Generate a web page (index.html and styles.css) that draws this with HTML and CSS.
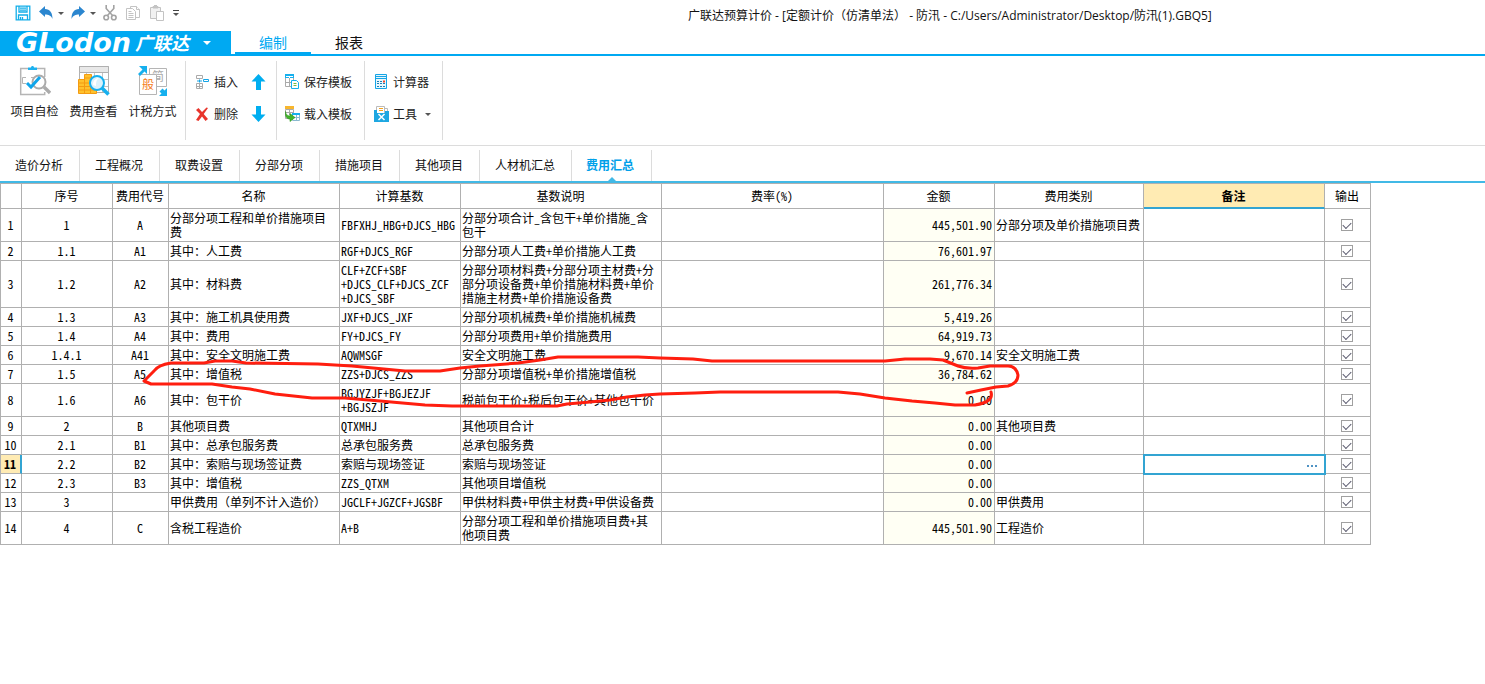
FILE: index.html
```html
<!DOCTYPE html>
<html lang="zh-CN">
<head>
<meta charset="utf-8">
<title>广联达预算计价</title>
<link rel="stylesheet" href="styles.css">
</head>
<body>
<header class="titlebar">
  <div class="quick">
    <button class="qbtn" aria-label="保存"><svg width="16" height="16" viewBox="0 0 16 16" fill="none" stroke="#12aee9" stroke-width="1.3"><path d="M1.2 1.2h13.6v13.6H1.2z"/><path d="M4 1v6h8V1M3.5 15v-5h9v5M5.500 12v3M7.500 12v3M5 3.200h6M5 5.200h6"/></svg></button>
    <button class="qbtn qbtn-wide" aria-label="撤销"><svg width="14" height="14" viewBox="0 0 14 14"><path fill="#2b86cf" d="M0 5.500 6 0v3C11 3.200 13.500 6.500 13.500 13 12 9.500 9.500 8.500 6 8.500V11z"/></svg><i class="caret"></i></button>
    <button class="qbtn qbtn-wide" aria-label="恢复"><svg width="14" height="14" viewBox="0 0 14 14"><path fill="#2b86cf" d="M14 5.500 8 0v3C3 3.200.5 6.500.5 13 2 9.500 4.500 8.500 8 8.500V11z"/></svg><i class="caret"></i></button>
    <button class="qbtn" aria-label="剪切"><svg width="14" height="16" viewBox="0 0 14 16" fill="none" stroke="#a3a3a3" stroke-width="1.600"><circle cx="3.200" cy="12.500" r="2.300"/><circle cx="10.800" cy="12.500" r="2.300"/><path d="M3.200 0v3.500l6.300 7M10.800 0v3.500l-6.300 7"/></svg></button>
    <button class="qbtn" aria-label="复制"><svg width="16" height="16" viewBox="0 0 16 16" fill="#fff" stroke="#c3c3c3"><path d="M5.500 1.500h6l3 3v8h-9z"/><path d="M1.500 3.500h6l3 3v8h-9z"/><path d="M3.500 6.500h3M3.500 8.500h5M3.500 10.500h5M3.500 12.500h5M11.500 1.500v3h3"/></svg></button>
    <button class="qbtn" aria-label="粘贴"><svg width="16" height="16" viewBox="0 0 16 16" fill="#f1f1f1" stroke="#c3c3c3"><path d="M1.500 2.500h10v11h-10z"/><path fill="#c3c3c3" d="M4 3V1.500h1.500V0h2v1.500H9V3z"/><path fill="#fff" d="M7.500 6.500h7v9h-7z"/></svg></button>
    <button class="qbtn qbtn-more" aria-label="更多"><i class="bar"></i><i class="caret"></i></button>
  </div>
  <div class="title">广联达预算计价 - [定额计价（仿清单法） - 防汛 - C:/Users/Administrator/Desktop/防汛(1).GBQ5]</div>
</header>

<nav class="menubar">
  <button class="brand"><span class="brand-en">GLodon</span><span class="brand-cn">广联达</span><i class="caret caret-white"></i></button>
  <button class="menu menu-active">编制</button>
  <button class="menu">报表</button>
</nav>

<section class="ribbon">
  <div class="group group-big">
    <button class="big"><svg width="32" height="32" viewBox="0 0 32 32" fill="none"><path stroke="#b5b5b5" stroke-width="1.500" d="M9 3.500H1.700v26h24V27M18 3.500h7.700V12"/><path fill="#1cb1ef" d="M9 5V2.500h3C12 .5 15 .5 15 2.500h3V5z"/><path stroke="#b5b5b5" d="M7 12.500H3.500v6H7M12 12.500h3"/><circle cx="20" cy="17" r="6.500" stroke="#ababab" stroke-width="2"/><path stroke="#0fa5ea" stroke-width="3" d="m8 18 4 4 9-10"/><path stroke="#ababab" stroke-width="3.400" d="m25 22 6 6"/></svg>项目自检</button>
    <button class="big"><svg width="32" height="32" viewBox="0 0 32 32" fill="none"><path fill="#fff" stroke="#b0b0b0" d="M1.500 1.500h29v26h-29z"/><path fill="#e8e8e8" stroke="#b0b0b0" d="M1.500 1.500h29v6h-29z"/><path stroke="#c4c4c4" d="M8.500 8v19M16.500 8v19M24.500 8v19M2 14.500h28M2 21.500h28"/><path fill="#ffc12c" stroke="#f39b12" d="M.5 14.500h6v-5h7v7h5v12H.5z"/><path stroke="#f39b12" d="M.5 18h12M.5 21.500h17M.5 25h17M6.500 13h7M6.500 14v14M12.500 16v12"/><circle cx="19" cy="18" r="7" fill="#dcf2fb" stroke="#16b0ee" stroke-width="2"/><path fill="#fff" d="M15 20c0-5 3-7 6-7-3 2-3 5-3 8z"/><path stroke="#16b0ee" stroke-width="3.500" d="m24 23 6.500 6.500"/></svg>费用查看</button>
    <button class="big"><svg width="32" height="32" viewBox="0 0 32 32"><path fill="#fff" stroke="#b5b5b5" d="M12.500 3.500h17v18h-17z"/><text class="glyph glyph-gray" x="15" y="16">简</text><path fill="#fff" stroke="#b5b5b5" d="M2.500 9.500h17v20h-17z"/><text class="glyph glyph-orange" x="5" y="24">般</text><path fill="#16b0ee" d="M10 1v8L7.500 6.500 3 11 1 9l4.500-4.500L2 1zM22 31h8v-8l-2.500 2.500-2-2-3 3 2 2z"/></svg>计税方式</button>
  </div>
  <div class="group">
    <div class="stack">
      <button class="small"><svg width="15" height="15" viewBox="0 0 15 15" fill="none"><path stroke="#aaa" d="M1.500.5h6v3h-6zM1.500 8.500h6v5h-6zM4.500 8.500v5M1.500 11.500h6"/><path stroke="#16a5e6" d="M2 6h5M4.500 4.500v3M8.500 4.500h5v2h-5z"/></svg>插入</button>
      <button class="small"><svg width="15" height="15" viewBox="0 0 15 15"><path fill="#e8352c" d="M1 3 3.500 1 7 5l4.500-4.500 1.500.5-4.300 6L13 12l-2.500 2L7 9.500 3.500 14 1 13l4-6z"/></svg>删除</button>
    </div>
    <div class="stack">
      <button class="small" aria-label="上移"><svg width="15" height="16" viewBox="0 0 15 16"><path fill="#00aef0" d="m7.500 0 7 7.500H10V16H5V7.500H.500z"/></svg></button>
      <button class="small" aria-label="下移"><svg width="15" height="16" viewBox="0 0 15 16"><path fill="#00aef0" d="m7.500 16 7-7.500H10V0H5v8.500H.500z"/></svg></button>
    </div>
  </div>
  <div class="group group-template">
    <div class="stack">
      <button class="small"><svg width="15" height="16" viewBox="0 0 15 16" fill="none"><path fill="#16b0ee" d="M0 0h9v4H0z"/><path stroke="#aaa" d="M.5 4v8.500H6M.5 8.500h6M4.500 4v8M8.500 4v3"/><path stroke="#fff" d="M1 2.500h7M4.500 2v2"/><path fill="#fff" stroke="#16b0ee" d="M6.500 6.500h5l2 2v6h-7z"/><path stroke="#7cba3d" d="M8.500 9.500h3M8.500 11.500h3"/></svg>保存模板</button>
      <button class="small"><svg width="15" height="16" viewBox="0 0 15 16" fill="none"><path fill="#fff" stroke="#aaa" d="M.5 3.500h8v9h-8zM.5 6.500h8M4.500 4v5"/><path fill="#f8b62d" d="M0 0h9v3H0z"/><path fill="#fff" stroke="#8ab9d0" d="M7.500 8.500h7v6h-7zM7.500 11.500h7M11.500 9v5"/><path fill="#16b0ee" d="M7 7h8v2H7z"/><path fill="#43b52c" stroke="#2c981a" stroke-width=".6" d="M.5 5.500C0 11 2 13 5 13v2.500l5-4-5-4V10C3 10 1 9 .5 5.500z"/></svg>载入模板</button>
    </div>
  </div>
  <div class="group group-tools">
    <div class="stack">
      <button class="small"><svg width="15" height="16" viewBox="0 0 15 16" fill="none"><path fill="#e8f7fd" stroke="#16a5e6" d="M1.500.5h11v14h-11z"/><path stroke="#16a5e6" d="M1 2.500h12M2 4.500h10"/><path stroke="#1b7fb8" stroke-dasharray="2 1" d="M3 7.500h5M3 9.500h8M3 12.500h8"/><path stroke="#f0452b" stroke-width="2" d="M9 7.500h2"/></svg>计算器</button>
      <button class="small"><svg width="15" height="16" viewBox="0 0 15 16" fill="none"><path fill="#fff" stroke="#bbb" d="M2.500.5h8v8h-8zM10.500 2.500h3v5h-3"/><path stroke="#f8a51b" d="M5 2.500h4M5 4.500h4"/><path fill="#1ea7e1" d="M0 4h3v3h8V5h4v11H0z"/><path stroke="#fff" stroke-width="1.500" d="m4.500 8 6 6M10.500 8l-6 6"/></svg>工具<i class="caret"></i></button>
    </div>
  </div>
</section>

<nav class="tabs">
  <button class="tab">造价分析</button>
  <button class="tab">工程概况</button>
  <button class="tab">取费设置</button>
  <button class="tab">分部分项</button>
  <button class="tab">措施项目</button>
  <button class="tab">其他项目</button>
  <button class="tab">人材机汇总</button>
  <button class="tab tab-active">费用汇总</button>
</nav>

<main class="sheet">
  <table class="grid">
    <colgroup><col class="c-idx"><col class="c-no"><col class="c-code"><col class="c-name"><col class="c-base"><col class="c-desc"><col class="c-rate"><col class="c-amt"><col class="c-type"><col class="c-note"><col class="c-out"></colgroup>
    <thead>
      <tr><th></th><th>序号</th><th>费用代号</th><th>名称</th><th>计算基数</th><th>基数说明</th><th>费率(%)</th><th>金额</th><th>费用类别</th><th class="th-current">备注</th><th>输出</th></tr>
    </thead>
    <tbody>
      <tr><td>1</td><td>1</td><td>A</td><td>分部分项工程和单价措施项目费</td><td>FBFXHJ_HBG+DJCS_HBG</td><td>分部分项合计_含包干+单价措施_含包干</td><td></td><td>445,501.90</td><td>分部分项及单价措施项目费</td><td></td><td><input type="checkbox" class="tick" aria-label="输出 1" checked></td></tr>
      <tr><td>2</td><td>1.1</td><td>A1</td><td>其中：人工费</td><td>RGF+DJCS_RGF</td><td>分部分项人工费+单价措施人工费</td><td></td><td>76,601.97</td><td></td><td></td><td><input type="checkbox" class="tick" aria-label="输出 2" checked></td></tr>
      <tr><td>3</td><td>1.2</td><td>A2</td><td>其中：材料费</td><td>CLF+ZCF+SBF<br>+DJCS_CLF+DJCS_ZCF<br>+DJCS_SBF</td><td>分部分项材料费+分部分项主材费+分部分项设备费+单价措施材料费+单价措施主材费+单价措施设备费</td><td></td><td>261,776.34</td><td></td><td></td><td><input type="checkbox" class="tick" aria-label="输出 3" checked></td></tr>
      <tr><td>4</td><td>1.3</td><td>A3</td><td>其中：施工机具使用费</td><td>JXF+DJCS_JXF</td><td>分部分项机械费+单价措施机械费</td><td></td><td>5,419.26</td><td></td><td></td><td><input type="checkbox" class="tick" aria-label="输出 4" checked></td></tr>
      <tr><td>5</td><td>1.4</td><td>A4</td><td>其中：费用</td><td>FY+DJCS_FY</td><td>分部分项费用+单价措施费用</td><td></td><td>64,919.73</td><td></td><td></td><td><input type="checkbox" class="tick" aria-label="输出 5" checked></td></tr>
      <tr><td>6</td><td>1.4.1</td><td>A41</td><td>其中：安全文明施工费</td><td>AQWMSGF</td><td>安全文明施工费</td><td></td><td>9,670.14</td><td>安全文明施工费</td><td></td><td><input type="checkbox" class="tick" aria-label="输出 6" checked></td></tr>
      <tr><td>7</td><td>1.5</td><td>A5</td><td>其中：增值税</td><td>ZZS+DJCS_ZZS</td><td>分部分项增值税+单价措施增值税</td><td></td><td>36,784.62</td><td></td><td></td><td><input type="checkbox" class="tick" aria-label="输出 7" checked></td></tr>
      <tr><td>8</td><td>1.6</td><td>A6</td><td>其中：包干价</td><td>BGJYZJF+BGJEZJF<br>+BGJSZJF</td><td>税前包干价+税后包干价+其他包干价</td><td></td><td>0.00</td><td></td><td></td><td><input type="checkbox" class="tick" aria-label="输出 8" checked></td></tr>
      <tr><td>9</td><td>2</td><td>B</td><td>其他项目费</td><td>QTXMHJ</td><td>其他项目合计</td><td></td><td>0.00</td><td>其他项目费</td><td></td><td><input type="checkbox" class="tick" aria-label="输出 9" checked></td></tr>
      <tr><td>10</td><td>2.1</td><td>B1</td><td>其中：总承包服务费</td><td>总承包服务费</td><td>总承包服务费</td><td></td><td>0.00</td><td></td><td></td><td><input type="checkbox" class="tick" aria-label="输出 10" checked></td></tr>
      <tr class="row-current"><td>11</td><td>2.2</td><td>B2</td><td>其中：索赔与现场签证费</td><td>索赔与现场签证</td><td>索赔与现场签证</td><td></td><td>0.00</td><td></td><td class="cell-edit"><button class="more" aria-label="编辑备注"><i></i><i></i><i></i></button></td><td><input type="checkbox" class="tick" aria-label="输出 11" checked></td></tr>
      <tr><td>12</td><td>2.3</td><td>B3</td><td>其中：增值税</td><td>ZZS_QTXM</td><td>其他项目增值税</td><td></td><td>0.00</td><td></td><td></td><td><input type="checkbox" class="tick" aria-label="输出 12" checked></td></tr>
      <tr><td>13</td><td>3</td><td></td><td>甲供费用（单列不计入造价）</td><td>JGCLF+JGZCF+JGSBF</td><td>甲供材料费+甲供主材费+甲供设备费</td><td></td><td>0.00</td><td>甲供费用</td><td></td><td><input type="checkbox" class="tick" aria-label="输出 13" checked></td></tr>
      <tr><td>14</td><td>4</td><td>C</td><td>含税工程造价</td><td>A+B</td><td>分部分项工程和单价措施项目费+其他项目费</td><td></td><td>445,501.90</td><td>工程造价</td><td></td><td><input type="checkbox" class="tick" aria-label="输出 14" checked></td></tr>
    </tbody>
  </table>
  <svg class="markup" width="900" height="70" viewBox="130 350 900 70" fill="none" stroke="#ff1e0f" stroke-width="3" stroke-linecap="round" stroke-linejoin="round"><path d="M967 393 981 390 996 387 1008 386Q1018 383 1018 375 1016 366 1008 366L990 366 978 368Q966 369 958 366L943 360 930 359H905L885 361H712L693 359 660 358 638 357H558L540 360 518 363 480 366 460 368 440 371H405L352 366 318 364 246 363 232 361H215L204 363 171 363Q158 365 154 371L144 381 151 384H212L232 387 250 389 275 394 312 398H345L380 401 425 405 452 406H557L567 404 590 402 610 400 627 397 645 395 660 394 695 393 720 392H838L860 394 885 398 912 401 935 403 955 405H975Q994 402 991 392"/></svg>
</main>
</body>
</html>
```
FILE: styles.css
```css
* { box-sizing: border-box; }

body {
  margin: 0;
  background: #fff;
  color: #111;
  font: 12px/16px "Noto Sans CJK SC", sans-serif;
}

button {
  margin: 0;
  padding: 0;
  border: 0;
  background: none;
  color: inherit;
  font: inherit;
  white-space: nowrap;
}

svg { display: block; flex: none; }

.caret {
  width: 0;
  height: 0;
  border: 3px solid transparent;
  border-top-color: #555;
  border-bottom: 0;
}

.caret-white { border-width: 4px 4px 0; border-top-color: #fff; }

/* Title bar */
.titlebar {
  display: flex;
  align-items: center;
  height: 31px;
}

.quick {
  display: flex;
  align-items: center;
  gap: 8px;
  flex: none;
  width: 688px;
  padding: 0 0 5px 15px;
}

.qbtn { display: flex; align-items: center; gap: 5px; }
.qbtn-wide { width: 24px; }
.qbtn-more { flex-direction: column; gap: 2px; }
.bar { width: 6px; height: 1px; background: #444; }

.title {
  font-family: "Open Sans", "Noto Sans CJK SC", sans-serif;
  white-space: nowrap;
}

/* Menu bar */
.menubar {
  display: flex;
  height: 25px;
  border-bottom: 2px solid #00a9f2;
}

.brand {
  display: flex;
  align-items: center;
  gap: 4px;
  width: 231px;
  margin-right: 4px;
  padding-left: 16px;
  background: #00a9f2;
  color: #fff;
}

.brand-en { font: italic bold 27px/23px "DejaVu Sans", sans-serif; }
.brand-cn { font: italic bold 18px/23px "Noto Sans CJK SC", sans-serif; }
.brand .caret { margin-left: 10px; }

.menu { width: 76px; padding-bottom: 2px; font-size: 14px; }

.menu-active {
  padding-bottom: 0;
  color: #00a9f2;
  border-bottom: 2px solid #00a9f2;
}

/* Ribbon */
.ribbon {
  display: flex;
  height: 90px;
  padding: 5px 0;
  border-bottom: 1px solid #dcdcdc;
  color: #222;
}

.group {
  display: flex;
  gap: 13px;
  padding: 0 10px 0 9px;
  border-right: 1px solid #dcdcdc;
}

.group-big { gap: 0; padding: 4px 3px 0 5px; }
.group-template { padding: 0 12px 0 8px; }
.group-tools { padding: 0 11px 0 9px; }

.big {
  display: flex;
  flex-direction: column;
  align-items: center;
  gap: 6px;
  width: 59px;
}

.glyph { font: 12px "Noto Sans CJK SC", sans-serif; }
.glyph-gray { fill: #aaa; }
.glyph-orange { fill: #f47b20; }

.stack {
  display: flex;
  flex-direction: column;
  gap: 16px;
  padding-top: 13px;
}

.small { display: flex; align-items: center; gap: 4px; height: 16px; }
.small .caret { margin-left: 4px; }

/* Page tabs */
.tabs {
  display: flex;
  height: 37px;
  padding-top: 4px;
  border-bottom: 2px solid #41b9e6;
}

.tab {
  position: relative;
  padding: 0 16px 2px 15px;
  border-right: 1px solid #dcdcdc;
}

.tab-active { padding: 0 17px 2px 14px; color: #00a0e9; font-weight: bold; }

.tab-active::after {
  content: "";
  position: absolute;
  left: 50%;
  bottom: 0;
  margin-left: -4px;
  border: 4px solid transparent;
  border-top: 0;
  border-bottom-color: #41b9e6;
}

/* Cost table */
.sheet { position: relative; }

.grid {
  width: 1371px;
  table-layout: fixed;
  border-collapse: separate;
  border-spacing: 0;
  border-top: 1px solid #b0b0b0;
  border-left: 1px solid #b0b0b0;
  color: #000;
  line-height: 14px;
  font-feature-settings: "hwid" 1;
}

.c-idx { width: 21px; }
.c-no { width: 91px; }
.c-code { width: 56px; }
.c-name { width: 171px; }
.c-base { width: 121px; }
.c-desc { width: 201px; }
.c-rate { width: 222px; }
.c-amt { width: 111px; }
.c-type { width: 149px; }
.c-note { width: 181px; }
.c-out { width: 46px; }

.grid th,
.grid td {
  padding: 2px 2px 2px 1px;
  border-right: 1px solid #b0b0b0;
  border-bottom: 1px solid #b0b0b0;
  text-align: left;
  vertical-align: middle;
}

.grid th {
  height: 25px;
  font-weight: normal;
  text-align: center;
  white-space: nowrap;
  padding: 0 1px 0 0;
}

.grid .th-current {
  background: #ffebb3;
  border-bottom: 2px solid #33a4d2;
  font-weight: bold;
}

.grid td { word-break: break-all; }

.grid td:nth-child(-n+3),
.grid td:last-child { text-align: center; }

.grid td:nth-child(-n+3) { padding: 2px 1px 2px 0; }

.grid td:nth-child(4) {
  padding-right: 3px;
  font-feature-settings: normal;
}

.grid td:nth-child(8) { background: #fffff4; text-align: right; }

.grid .row-current td:first-child {
  background: #ffebb3;
  border-right: 2px solid #33a4d2;
  font-weight: bold;
}

.grid .cell-edit {
  padding-right: 7px;
  outline: 2px solid #33a4d2;
  outline-offset: -1px;
  text-align: right;
}

.more { display: inline-flex; gap: 2px; vertical-align: middle; }
.more i { width: 2px; height: 2px; background: #4f93c4; }

.tick {
  appearance: none;
  display: block;
  width: 12px;
  height: 12px;
  margin: 0 auto;
  border: 1px solid #a0a0a0;
  background: #fff;
}

.tick:checked::after {
  content: "";
  display: block;
  width: 7px;
  height: 4px;
  margin: 2px 0 0 1px;
  border: solid #5a5a6e;
  border-width: 0 0 1px 1px;
  transform: rotate(-45deg);
}

/* Freehand mark over the table */
.markup {
  position: absolute;
  left: 130px;
  top: 167px;
  pointer-events: none;
}
```
